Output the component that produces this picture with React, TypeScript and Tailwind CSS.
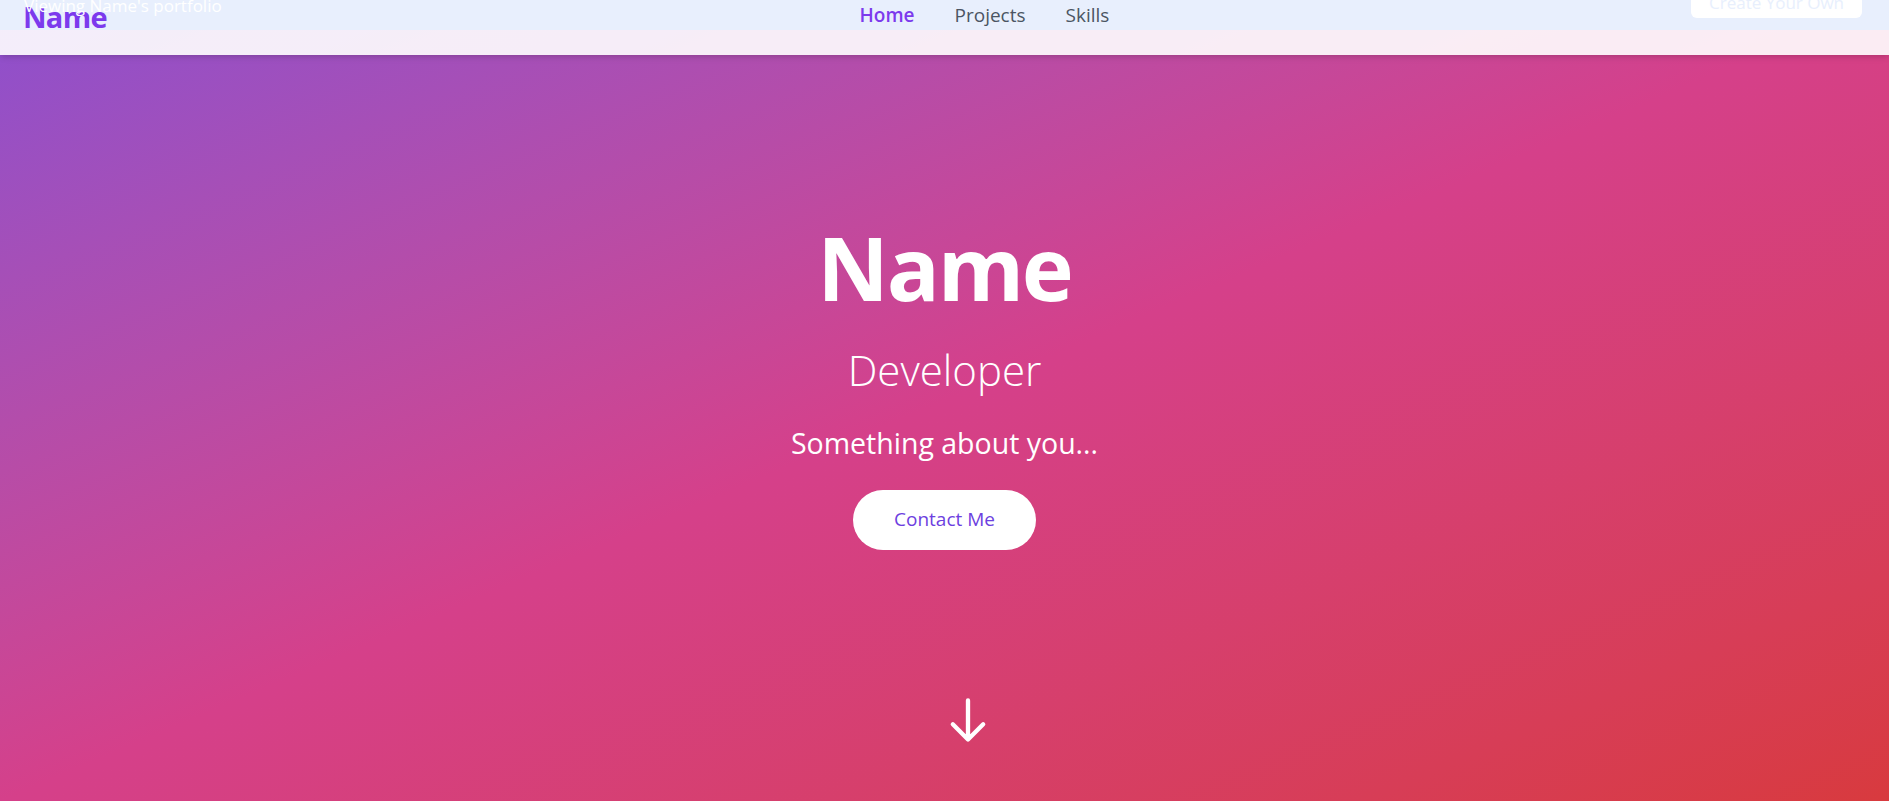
import React from 'react';

const navItems = [
  { label: 'Home', active: true },
  { label: 'Projects', active: false },
  { label: 'Skills', active: false },
];

function ArrowDown() {
  return (
    <svg
      viewBox="0 0 24 24"
      fill="none"
      stroke="currentColor"
      strokeWidth={2}
      strokeLinecap="round"
      strokeLinejoin="round"
      className="w-[52px] h-[52px] text-white"
    >
      <path d="M19 14l-7 7m0 0l-7-7m7 7V3" />
    </svg>
  );
}

export default function App() {
  return (
    <div
      className="relative min-h-screen overflow-hidden bg-linear-to-br from-[#8c4fce] via-[#d5408a] to-[#d83a3e]"
      style={{ fontFamily: '"Open Sans", "Noto Sans", sans-serif' }}
    >
      {/* Header */}
      <header className="relative z-10 h-[55px] bg-white/90 shadow-md">
        <div className="relative h-[30px] bg-[#e8effd] flex items-center justify-between pl-[23px] pr-6">
          <span className="text-[29px] font-bold text-[#7c3aed] leading-none tracking-tight pt-[2px]">
            Name
          </span>
          <nav className="absolute left-0 right-0 pl-[80px] flex justify-center gap-10 pointer-events-none">
            {navItems.map((item) => (
              <a
                key={item.label}
                className={`text-[19px] leading-none pointer-events-auto ${
                  item.active ? 'text-[#7c3aed] font-semibold' : 'text-[#4b5563]'
                }`}
              >
                {item.label}
              </a>
            ))}
          </nav>
          <button className="relative -top-[14px] mr-[3px] w-[171px] h-[34px] rounded-md bg-white text-[#e8effd] text-[17px] flex items-end justify-center pb-[3px]">
            Create Your Own
          </button>
        </div>
        {/* Preview banner text */}
        <span className="absolute left-6 -top-[7px] text-[17px] text-white whitespace-nowrap">
          Viewing Name's portfolio
        </span>
      </header>

      {/* Hero */}
      <section className="flex flex-col items-center text-white text-center pt-[168px]">
        <h1 className="text-[88px] font-bold leading-none tracking-tight">Name</h1>
        <h2 className="mt-[38px] text-[42px] font-light leading-none">Developer</h2>
        <p className="mt-[38px] text-[28.5px] leading-none">Something about you...</p>
        <button className="mt-[32px] w-[183px] h-[60px] rounded-full bg-white text-[#6d3fe0] text-[19px]">
          Contact Me
        </button>
        <div className="mt-[144px] pl-[47px]">
          <ArrowDown />
        </div>
      </section>
    </div>
  );
}
